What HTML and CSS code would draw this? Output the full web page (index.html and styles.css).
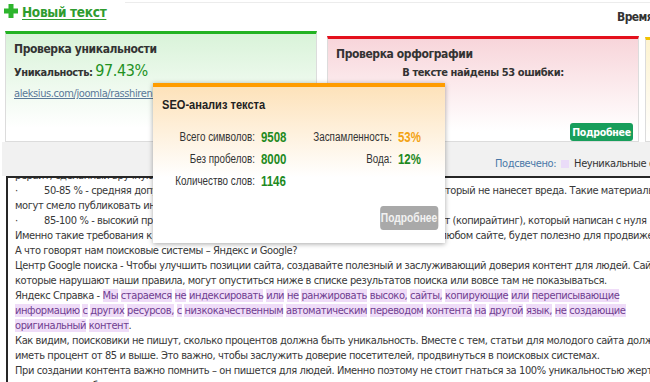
FILE: index.html
```html
<!DOCTYPE html>
<html lang="ru">
<head>
<meta charset="utf-8">
<title>Проверка текста</title>
<link rel="stylesheet" href="styles.css">
</head>
<body>
<div class="page">
  <header class="topbar">
    <a class="new" href="#">
      <svg class="plus" width="14" height="14" viewBox="0 0 14 14"><rect x="4.5" y="0" width="5" height="14" fill="#2db52d"/><rect x="0" y="4.5" width="14" height="5" fill="#2db52d"/></svg>
      <span>Новый текст</span>
    </a>
    <div class="topright"><span class="time">Время проверки: 12:04</span></div>
  </header>

  <section class="cards">
    <div class="card uniq">
      <div class="card-title">Проверка уникальности</div>
      <div class="uniq-row"><b>Уникальность:</b> <span class="pct">97.43%</span></div>
      <a class="src" href="#">aleksius.com/joomla/rasshirennye-vozmozhnosti</a>
    </div>
    <div class="card spell">
      <div class="card-title">Проверка орфографии</div>
      <div class="errors">В тексте найдены 53 ошибки:</div>
      <a class="btn-green" href="#">Подробнее</a>
    </div>
    <div class="card third"></div>
  </section>

  <div class="band">
    <span class="legend">Подсвечено:</span><i class="swatch"></i><span>Неуникальные фрагменты</span>
  </div>

  <div class="editor">
    <div class="lines">
      <div class="ln">рерайт, сделанный вручную опытным автором.</div>
      <div class="ln"><span class="bul">·</span>50-85 % - средняя допустимая уникальность, подходит для обычного рерайта, который не нанесет вреда. Такие материалы</div>
      <div class="ln">могут смело публиковать информационные сайты.</div>
      <div class="ln"><span class="bul">·</span>85-100 % - высокий процент уникальности, это полностью новый, авторский текст (копирайтинг), который написан с нуля</div>
      <div class="ln">Именно такие требования к уникальности контента предъявляются поисковиками на любом сайте, будет полезно для продвижения</div>
      <div class="ln">А что говорят нам поисковые системы – Яндекс и Google?</div>
      <div class="ln">Центр Google поиска - Чтобы улучшить позиции сайта, создавайте полезный и заслуживающий доверия контент для людей. Сайты,</div>
      <div class="ln">которые нарушают наши правила, могут опуститься ниже в списке результатов поиска или вовсе там не показываться.</div>
      <div class="ln">Яндекс Справка - <span class="h">Мы</span> <span class="h">стараемся</span> <span class="h">не</span> <span class="h">индексировать</span> <span class="h">или</span> <span class="h">не</span> <span class="h">ранжировать</span> <span class="h">высоко,</span> <span class="h">сайты,</span> <span class="h">копирующие</span> <span class="h">или</span> <span class="h">переписывающие</span></div>
      <div class="ln"><span class="h">информацию</span> <span class="h">с</span> <span class="h">других</span> <span class="h">ресурсов,</span> <span class="h">с</span> <span class="h">низкокачественным</span> <span class="h">автоматическим</span> <span class="h">переводом</span> <span class="h">контента</span> <span class="h">на</span> <span class="h">другой</span> <span class="h">язык,</span> <span class="h">не</span> <span class="h">создающие</span></div>
      <div class="ln"><span class="h">оригинальный</span> <span class="h">контент</span>.</div>
      <div class="ln">Как видим, поисковики не пишут, сколько процентов должна быть уникальность. Вместе с тем, статьи для молодого сайта должны</div>
      <div class="ln">иметь процент от 85 и выше. Это важно, чтобы заслужить доверие посетителей, продвинуться в поисковых системах.</div>
      <div class="ln">При создании контента важно помнить – он пишется для людей. Именно поэтому не стоит гнаться за 100% уникальностью жертвуя</div>
      <div class="ln">смыслом и читабельностью текста.</div>
    </div>
  </div>

  <div class="popup">
    <div class="popup-body">
      <h3 class="popup-title">SEO-анализ текста</h3>
      <div class="stats">
        <span class="lbl">Всего символов:</span><span class="val">9508</span>
        <span class="lbl">Заспамленность:</span><span class="val orange">53%</span>
        <span class="lbl">Без пробелов:</span><span class="val">8000</span>
        <span class="lbl">Вода:</span><span class="val">12%</span>
        <span class="lbl">Количество слов:</span><span class="val">1146</span>
        <span></span><span></span>
      </div>
      <a class="btn-gray" href="#">Подробнее</a>
    </div>
  </div>
</div>
</body>
</html>
```

FILE: styles.css
```css
html, body {
  margin: 0;
  padding: 0;
  background: #fff;
}

body {
  font-family: "DejaVu Sans Condensed", "DejaVu Sans", sans-serif;
  font-stretch: condensed;
  letter-spacing: -0.4px;
  color: #333;
}

.page {
  position: relative;
  width: 650px;
  height: 382px;
  overflow: hidden;
}

/* top bar */
.topbar {
  display: flex;
  height: 31px;
}

.new {
  display: flex;
  align-items: flex-start;
  gap: 4px;
  width: 125px;
  padding: 4px 0 0 4px;
  box-sizing: border-box;
  flex: none;
  color: #2f9c2f;
  font-weight: bold;
  font-size: 13.5px;
  line-height: 14px;
  letter-spacing: -0.3px;
  text-decoration: none;
}

.new span {
  padding-top: 1px;
  text-decoration: underline;
  text-underline-offset: 2px;
  white-space: nowrap;
}

.plus {
  flex: none;
}

.topright {
  flex: 1;
  display: flex;
  margin-top: 2px;
  border-top: 1px solid #ececec;
}

.time {
  margin-left: auto;
  width: 33px;
  padding-top: 7px;
  font-size: 12px;
  line-height: 14px;
  font-weight: bold;
  letter-spacing: -0.6px;
  color: #333;
  white-space: nowrap;
}

/* cards */
.cards {
  display: flex;
  align-items: flex-end;
  gap: 10px;
  height: 111px;
  padding-left: 5px;
}

.card {
  flex: none;
  width: 312px;
  box-sizing: border-box;
  display: flex;
  flex-direction: column;
  align-items: flex-start;
  padding: 8px 8px 0 8px;
  border: 1px solid #dcdcdc;
  border-top: 3px solid #22b322;
}

.uniq {
  height: 111px;
  background: linear-gradient(#d9f3d9, #fff 88%);
}

.spell {
  height: 106px;
  border-top-color: #e4101c;
  background: linear-gradient(#f8d5da, #fff 90%);
}

.third {
  height: 105px;
  margin-left: -4px;
  border-top-color: #f2c200;
  background: linear-gradient(#fdf3d0, #fff);
}

.card-title {
  font-size: 12px;
  line-height: 14px;
  font-weight: bold;
  color: #333;
  white-space: nowrap;
}

.uniq-row {
  margin-top: 5px;
  line-height: 20px;
  font-size: 11px;
  white-space: nowrap;
}

.uniq-row b {
  color: #333;
}

.pct {
  font-size: 16px;
  color: #22911f;
}

.src {
  margin-top: 4px;
  font-size: 11px;
  line-height: 14px;
  color: #5a7898;
  white-space: nowrap;
}

.errors {
  align-self: stretch;
  margin-top: 5px;
  text-align: center;
  font-size: 11px;
  line-height: 14px;
  font-weight: bold;
  color: #333;
  white-space: nowrap;
}

.btn-green {
  margin-top: auto;
  align-self: flex-end;
  margin-right: -3px;
  width: 63px;
  height: 18px;
  border-radius: 3px;
  background: #179e5b;
  color: #fff;
  font-size: 10.5px;
  line-height: 18px;
  font-weight: bold;
  letter-spacing: -0.3px;
  text-align: center;
  text-decoration: none;
  white-space: nowrap;
}

/* legend band */
.band {
  display: flex;
  align-items: flex-start;
  height: 34px;
  box-sizing: border-box;
  padding: 15px 0 0 493px;
  margin-left: 2px;
  background: #f1f1f1;
  font-size: 11px;
  line-height: 14px;
  white-space: nowrap;
}

.legend {
  color: #4a78a8;
}

.swatch {
  flex: none;
  width: 8px;
  height: 8px;
  margin: 3px 5px 0 5px;
  background: #eadcf8;
}

/* editor */
.editor {
  margin-left: 6px;
  height: 206px;
  box-sizing: border-box;
  border-left: 2px solid #262626;
  border-top: 2px solid #262626;
  padding-left: 7px;
  overflow: hidden;
  font-size: 11px;
  line-height: 15px;
  color: #383838;
}

.lines {
  margin-top: -10px;
}

.ln {
  white-space: pre;
}

.bul {
  display: inline-block;
  width: 29px;
}

.h {
  background: #efdcf8;
  color: #6f3e90;
}

/* SEO popup */
.popup {
  position: absolute;
  left: 153px;
  top: 83px;
  width: 292px;
  height: 160px;
  box-sizing: border-box;
  padding: 10px 7px 13px 9px;
  border-top: 4px solid #ff9c00;
  background: linear-gradient(#fde2ba, #fff 58%);
  box-shadow: 0 1px 5px rgba(0, 0, 0, 0.35);
  font-family: "Liberation Sans", Arial, sans-serif;
  font-stretch: normal;
  letter-spacing: 0;
}

/* narrow typeface emulated by a horizontal squeeze of the popup content */
.popup-body {
  width: 336.6px;
  height: 100%;
  display: flex;
  flex-direction: column;
  transform: scaleX(0.82);
  transform-origin: 0 0;
}

.popup-title {
  margin: 0;
  font-size: 13.5px;
  line-height: 16px;
  font-weight: bold;
  color: #222;
}

.stats {
  display: grid;
  grid-template-columns: 113.4px 48.8px 103.7px auto;
  column-gap: 7.3px;
  margin-top: 13px;
  line-height: 22px;
  white-space: nowrap;
}

.lbl {
  text-align: right;
  font-size: 12px;
  color: #333;
}

.val {
  font-size: 14px;
  font-weight: bold;
  color: #1e8a1e;
}

.val.orange {
  color: #f3a313;
}

.btn-gray {
  margin-top: auto;
  align-self: flex-end;
  width: 70.7px;
  height: 24px;
  border-radius: 4px / 4px;
  background: #a9a9a9;
  color: #f2f2f2;
  font-size: 12.5px;
  line-height: 24px;
  font-weight: bold;
  text-align: center;
  text-decoration: none;
}
```
